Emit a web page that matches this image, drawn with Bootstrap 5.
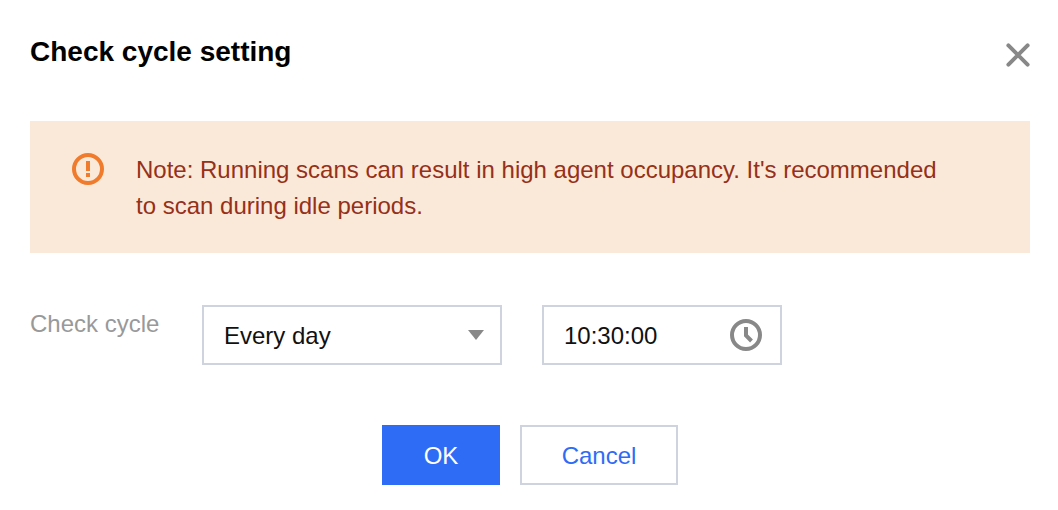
<!DOCTYPE html>
<html lang="en">
<head>
<meta charset="utf-8">
<meta name="viewport" content="width=device-width, initial-scale=1">
<title>Check cycle setting</title>
<link href="https://cdn.jsdelivr.net/npm/bootstrap@5.3.0/dist/css/bootstrap.min.css" rel="stylesheet">
<style>
  body { font-family: "Liberation Sans", Arial, sans-serif; font-size: 24px; line-height: 36px; color: #000; background: #fff; }
  .dialog { padding: 31px 28px 24px 30px; }
  .dialog-title { font-size: 28px; line-height: 42px; font-weight: 700; }
  .close-btn { width: 24px; height: 24px; color: #888; margin-top: 12px; }
  .close-btn svg, .note svg, .field svg { display: block; }
  .note { background: #fae9d8; color: #963019; padding: 31px 72px 29px 42px; margin-top: 48px; gap: 32px; }
  .note svg { color: #f07b2c; margin-top: 1px; }
  .cycle-row { margin-top: 52px; }
  .cycle-label { color: #999; width: 172px; padding-top: 1px; }
  .field { position: relative; }
  .field .form-select, .field .form-control { height: 60px; border: 2px solid #cfd3de; border-radius: 0; padding: 2px 20px 0; font-size: 24px; line-height: 36px; color: #111; background: #fff; }
  .cycle-field { width: 300px; }
  .time-field { width: 240px; margin-left: 40px; }
  .field svg { position: absolute; top: 50%; right: 18px; transform: translateY(-50%); color: #888; pointer-events: none; }
  .time-field svg { right: 20px; }
  .actions { margin-top: 60px; gap: 20px; }
  .actions .btn { height: 60px; border-radius: 0; border-width: 2px; padding: 2px 0 0; font-size: 24px; line-height: 36px; }
  .actions .ok-btn { width: 118px; background: #2e6cf6; border-color: #2e6cf6; color: #fff; }
  .actions .cancel-btn { width: 158px; background: #fff; border-color: #cfd3de; color: #2e6cf6; }
</style>
</head>
<body>
<main class="dialog">
  <header class="d-flex justify-content-between align-items-start">
    <h1 class="dialog-title mb-0">Check cycle setting</h1>
    <button type="button" class="close-btn border-0 bg-transparent p-0" aria-label="Close">
      <svg width="24" height="24" viewBox="0 0 24 24" fill="none" stroke="currentColor" stroke-width="4" stroke-linecap="round"><path d="M2.400 2.400 21.600 21.600M21.600 2.400 2.400 21.600"/></svg>
    </button>
  </header>
  <div class="note d-flex align-items-start" role="alert">
    <svg class="flex-shrink-0" width="32" height="32" viewBox="0 0 32 32" aria-hidden="true"><circle cx="16" cy="16" r="14" fill="none" stroke="currentColor" stroke-width="4"/><path d="M14 8h4v10h-4zM14 20h4v4h-4z" fill="currentColor"/></svg>
    <p class="mb-0">Note: Running scans can result in high agent occupancy. It's recommended to scan during idle periods.</p>
  </div>
  <form>
    <div class="cycle-row d-flex align-items-start">
      <label class="cycle-label flex-shrink-0" for="cycle">Check cycle</label>
      <div class="field cycle-field">
        <select id="cycle" class="form-select"><option>Every day</option><option>Every week</option></select>
        <svg width="16" height="10" viewBox="0 0 16 10" aria-hidden="true"><path d="M0 0h16L8 10z" fill="currentColor"/></svg>
      </div>
      <div class="field time-field">
        <input type="text" class="form-control" value="10:30:00" aria-label="Time">
        <svg width="32" height="32" viewBox="0 0 32 32" fill="none" stroke="currentColor" stroke-width="4" aria-hidden="true"><circle cx="16" cy="16" r="14"/><path d="M16 8v8.500l5.500 5.500"/></svg>
      </div>
    </div>
    <div class="actions d-flex justify-content-center">
      <button type="button" class="btn ok-btn">OK</button>
      <button type="button" class="btn cancel-btn">Cancel</button>
    </div>
  </form>
</main>
<script src="https://cdn.jsdelivr.net/npm/bootstrap@5.3.0/dist/js/bootstrap.bundle.min.js"></script>
</body>
</html>
